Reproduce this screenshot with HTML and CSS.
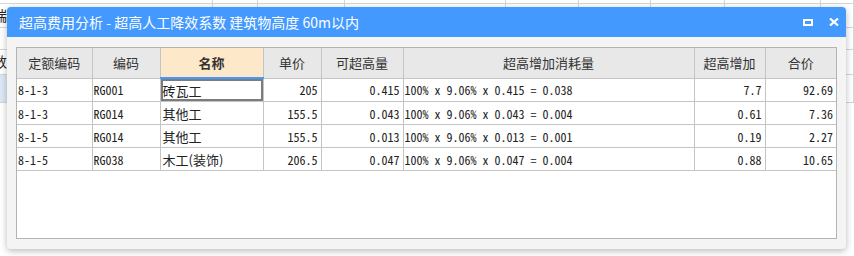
FILE: index.html
```html
<!DOCTYPE html>
<html lang="zh-CN">
<head>
    <meta charset="UTF-8">
    <title>超高费用分析</title>
    <link rel="stylesheet" href="styles.css">
</head>
<body>

<!-- 背后的表格 -->
<div class="sheet">
    <div class="cell first"></div><div class="cell"></div><div class="cell"></div><div class="cell"></div><div class="cell"></div><div class="cell"></div><div class="cell"></div><div class="cell"></div><div class="cell"></div><div class="cell"></div>
    <div class="cell first">瑞</div><div class="cell"></div><div class="cell"></div><div class="cell"></div><div class="cell"></div><div class="cell"></div><div class="cell"></div><div class="cell"></div><div class="cell"></div><div class="cell"></div>
    <div class="cell first"></div><div class="cell"></div><div class="cell"></div><div class="cell"></div><div class="cell"></div><div class="cell"></div><div class="cell"></div><div class="cell"></div><div class="cell"></div><div class="cell"></div>
    <div class="cell first">数</div><div class="cell"></div><div class="cell"></div><div class="cell"></div><div class="cell"></div><div class="cell"></div><div class="cell"></div><div class="cell"></div><div class="cell"></div><div class="cell"></div>
    <div class="cell first picked"></div><div class="cell"></div><div class="cell"></div><div class="cell"></div><div class="cell"></div><div class="cell"></div><div class="cell"></div><div class="cell"></div><div class="cell"></div><div class="cell picked"></div>
</div>

<!-- 超高费用分析 弹窗 -->
<div class="dialog">
    <div class="dialog-title">
        <span class="title-text">超高费用分析 - 超高人工降效系数 建筑物高度 60m以内</span>
        <span class="btn-max"></span>
        <svg class="btn-close" width="10" height="8" viewBox="0 0 10 8">
            <path d="M1 0.5 L9 7.5 M9 0.5 L1 7.5" stroke="#fff" stroke-width="2.2"/>
        </svg>
    </div>
    <div class="dialog-body">
        <div class="grid-box">
            <table class="grid">
                <colgroup>
                    <col style="width:75px">
                    <col style="width:68px">
                    <col style="width:103px">
                    <col style="width:58px">
                    <col style="width:82px">
                    <col style="width:291px">
                    <col style="width:71px">
                    <col style="width:71px">
                </colgroup>
                <thead>
                    <tr>
                        <th>定额编码</th>
                        <th>编码</th>
                        <th class="sorted">名称</th>
                        <th>单价</th>
                        <th>可超高量</th>
                        <th>超高增加消耗量</th>
                        <th>超高增加</th>
                        <th>合价</th>
                    </tr>
                </thead>
                <tbody>
                    <tr>
                        <td>8-1-3</td>
                        <td>RG001</td>
                        <td class="cn current">砖瓦工</td>
                        <td class="num">205</td>
                        <td class="num">0.415</td>
                        <td>100% x 9.06% x 0.415 = 0.038</td>
                        <td class="num">7.7</td>
                        <td class="num">92.69</td>
                    </tr>
                    <tr>
                        <td>8-1-3</td>
                        <td>RG014</td>
                        <td class="cn">其他工</td>
                        <td class="num">155.5</td>
                        <td class="num">0.043</td>
                        <td>100% x 9.06% x 0.043 = 0.004</td>
                        <td class="num">0.61</td>
                        <td class="num">7.36</td>
                    </tr>
                    <tr>
                        <td>8-1-5</td>
                        <td>RG014</td>
                        <td class="cn">其他工</td>
                        <td class="num">155.5</td>
                        <td class="num">0.013</td>
                        <td>100% x 9.06% x 0.013 = 0.001</td>
                        <td class="num">0.19</td>
                        <td class="num">2.27</td>
                    </tr>
                    <tr>
                        <td>8-1-5</td>
                        <td>RG038</td>
                        <td class="cn">木工(装饰)</td>
                        <td class="num">206.5</td>
                        <td class="num">0.047</td>
                        <td>100% x 9.06% x 0.047 = 0.004</td>
                        <td class="num">0.88</td>
                        <td class="num">10.65</td>
                    </tr>
                </tbody>
            </table>
        </div>
    </div>
</div>

</body>
</html>
```

FILE: styles.css
```css
/* 总体 */
body {
    margin: 0;
    height: 256px;
    overflow: hidden;
    background: #fff;
    font-family: "Noto Sans CJK SC", "Noto Sans", sans-serif;
    position: relative;
}

/* 背后的表格 */
.sheet {
    display: grid;
    grid-template-columns: 213px 45px 87px 161px 73px 72px 74px 96px 33px 100px;
    grid-template-rows: 4px 24px 22px 25px 28px;
    font-size: 14px;
    color: #222;
}

.cell {
    border-right: 1px solid #d6d6d6;
    border-bottom: 1px solid #d6d6d6;
    overflow: hidden;
    white-space: nowrap;
    line-height: 23px;
}

.cell.first {
    text-indent: -7px;
}

.cell.picked {
    background: #dce8f6;
}

/* 弹窗 */
.dialog {
    position: absolute;
    left: 7px;
    top: 7px;
    width: 839px;
    height: 242px;
    background: #f4f4f4;
    border-radius: 4px;
    box-shadow: 0 2px 7px rgba(0, 0, 0, 0.28);
    overflow: hidden;
}

.dialog-title {
    height: 30px;
    background: #4499ff;
    color: #fff;
    display: flex;
    align-items: center;
    padding: 0 7px 0 12px;
    font-size: 14px;
}

.title-text {
    flex: 1;
    white-space: nowrap;
}

.btn-max {
    width: 6px;
    height: 3px;
    border: 2px solid #fff;
    margin-right: 16px;
}

.btn-close {
    display: block;
}

.dialog-body {
    padding: 10px 9px;
}

.grid-box {
    height: 190px;
    width: 819px;
    background: #fff;
    border: 1px solid #b4b4b4;
}

/* 数据表 */
.grid {
    border-collapse: collapse;
    table-layout: fixed;
    width: 819px;
}

.grid th,
.grid td {
    border-right: 1px solid #c4c4c4;
    border-bottom: 1px solid #c4c4c4;
    padding: 0 2px;
    white-space: nowrap;
    overflow: hidden;
}

.grid th:last-child,
.grid td:last-child {
    border-right: none;
}

.grid th {
    height: 29px;
    background: #e8e8e8;
    font-size: 13px;
    font-weight: normal;
    color: #333;
    text-align: center;
}

.grid th.sorted {
    background: #fde8c9;
    font-weight: bold;
    border-bottom: 2px solid #4499ff;
}

.grid td {
    height: 22px;
    font-family: "Noto Sans Mono CJK SC", "Liberation Mono", monospace;
    font-size: 12px;
    color: #222;
    padding: 0 1px;
}

.grid td.cn {
    font-family: "Noto Sans CJK SC", sans-serif;
    font-size: 13px;
    padding-left: 2px;
}

.grid td.num {
    text-align: right;
    padding-right: 3px;
}

.grid td.current {
    box-shadow: inset 0 0 0 2px #7c7c7c;
}
```
